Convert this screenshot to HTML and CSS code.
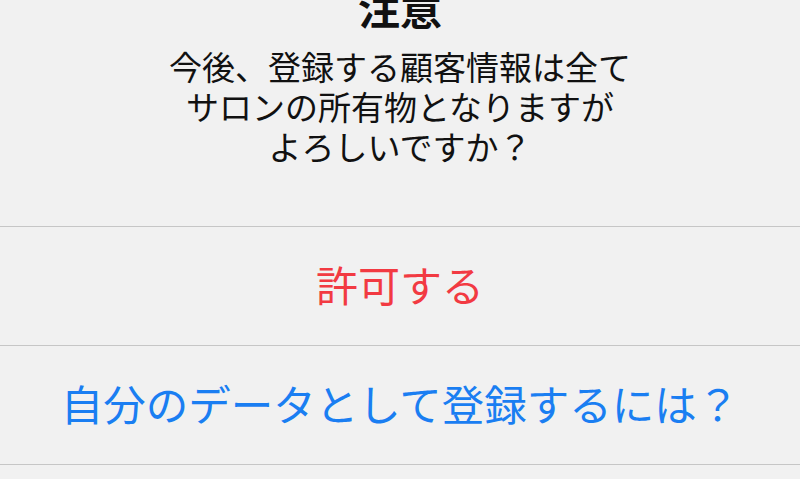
FILE: index.html
```html
<!DOCTYPE html>
<html lang="ja">
<head>
<meta charset="utf-8">
<link rel="stylesheet" href="styles.css">
</head>
<body>
<div class="alert">
  <div class="alert-head">
    <div class="alert-title">注意</div>
    <div class="alert-msg">今後、登録する顧客情報は全て<br>サロンの所有物となりますが<br>よろしいですか？</div>
  </div>
  <div class="alert-btn btn-red">許可する</div>
  <div class="alert-btn btn-blue">自分のデータとして登録するには？</div>
  <div class="alert-rest"></div>
</div>
</body>
</html>
```
FILE: styles.css
```css
html, body {
  margin: 0;
  padding: 0;
  background: #f1f1f1;
  overflow: hidden;
}
body {
  width: 800px;
  height: 479px;
  font-family: "Noto Sans CJK JP", "Noto Sans", sans-serif;
}
.alert {
  display: flex;
  flex-direction: column;
}
.alert-head {
  display: flex;
  flex-direction: column;
  align-items: center;
  padding-bottom: 60px;
}
.alert-title {
  font-size: 42px;
  font-weight: 700;
  line-height: 48px;
  margin-top: -17px;
  color: #111;
}
.alert-msg {
  margin-top: 15px;
  font-size: 33px;
  line-height: 40px;
  text-align: center;
  color: #111;
}
.alert-btn {
  height: 113px;
  padding-bottom: 5px;
  border-top: 1px solid #c6c6c6;
  display: flex;
  align-items: center;
  justify-content: center;
  font-size: 42px;
}
.btn-red { color: #f23a42; }
.btn-blue { color: #1a7ef2; font-size: 42.5px; }
.alert-rest {
  border-top: 1px solid #c6c6c6;
  height: 20px;
}
```
